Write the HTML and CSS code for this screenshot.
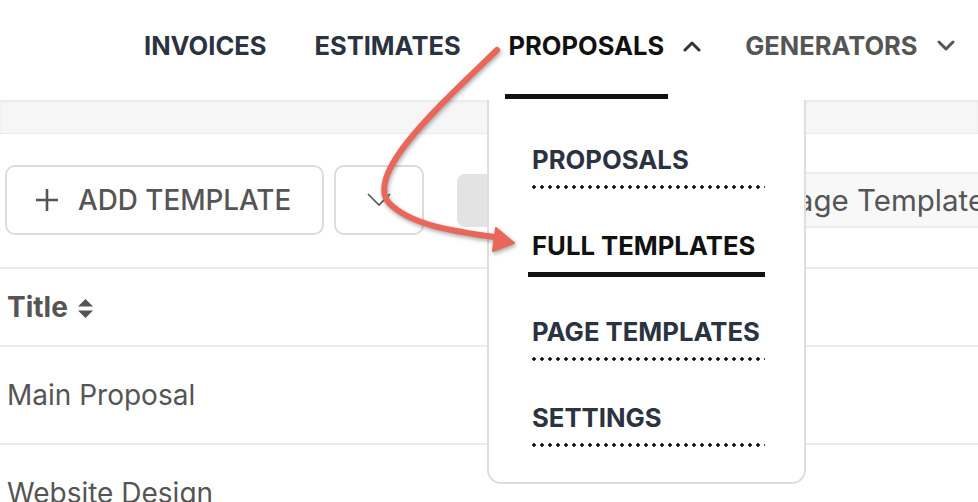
FILE: index.html
```html
<!DOCTYPE html>
<html>
<head>
    <title>Proposals - Full Templates</title>
    <link rel="stylesheet" href="styles.css">
</head>
<body>
    <header class="topbar">
        <nav class="nav">
            <a class="nav-item"><span class="nav-label">INVOICES</span></a>
            <a class="nav-item"><span class="nav-label">ESTIMATES</span></a>
            <a class="nav-item active">
                <span class="nav-label">PROPOSALS</span>
                <svg class="chevron" width="18" height="12" viewBox="0 0 18 12"><path d="M2 10 L9 3 L16 10" fill="none" stroke="#333" stroke-width="3" stroke-linecap="round" stroke-linejoin="round"/></svg>
            </a>
            <a class="nav-item muted">
                <span class="nav-label">GENERATORS</span>
                <svg class="chevron" width="18" height="12" viewBox="0 0 18 12"><path d="M2 2 L9 9 L16 2" fill="none" stroke="#555" stroke-width="3" stroke-linecap="round" stroke-linejoin="round"/></svg>
            </a>
        </nav>
    </header>
    <div class="subbar"></div>

    <main class="content">
        <div class="toolbar">
            <button class="btn btn-add">
                <svg width="24" height="24" viewBox="0 0 24 24"><path d="M12 1 V23 M1 12 H23" stroke="#555" stroke-width="2.6" fill="none"/></svg>
                ADD TEMPLATE
            </button>
            <button class="btn btn-caret">
                <svg width="24" height="14" viewBox="0 0 24 14"><path d="M1 1 L12 12 L23 1" fill="none" stroke="#555" stroke-width="1.6"/></svg>
            </button>
            <button class="btn-grey">
                <span class="grip">&#8942;</span>
            </button>
            <div class="filter">Page Templates</div>
        </div>

        <table class="list">
            <thead>
                <tr>
                    <th>Title
                        <svg class="sort" width="17" height="21" viewBox="0 0 17 21"><path d="M8.5 1 L16 8.5 H1 Z M1 12.5 H16 L8.5 20 Z" fill="#555"/></svg>
                    </th>
                </tr>
            </thead>
            <tbody>
                <tr><td>Main Proposal</td></tr>
                <tr><td>Website Design</td></tr>
            </tbody>
        </table>
    </main>

    <div class="dropdown">
        <ul>
            <li><a class="drop-item">PROPOSALS</a></li>
            <li><a class="drop-item current">FULL TEMPLATES</a></li>
            <li><a class="drop-item">PAGE TEMPLATES</a></li>
            <li><a class="drop-item">SETTINGS</a></li>
        </ul>
    </div>

    <!-- annotation arrow drawn over the screenshot -->
    <svg class="annotation" width="978" height="502" viewBox="0 0 978 502">
        <path d="M497 50 C 440 105, 364 174, 389 203 C 412 227, 462 232, 500 238" fill="none" stroke="#e8675a" stroke-width="6" stroke-linecap="round"/>
        <path d="M496 228 L514 243 L493 251 Z" fill="#e8675a" stroke="#e8675a" stroke-width="2" stroke-linejoin="round"/>
    </svg>
</body>
</html>
```

FILE: styles.css
```css
body {
    margin: 0;
    font-family: Inter, "Noto Sans", Arial, sans-serif;
    background: #fff;
    color: #555;
    width: 978px;
    height: 502px;
    overflow: hidden;
    position: relative;
}
.topbar {
    height: 100px;
    background: #fff;
}
.nav {
    display: flex;
    height: 100px;
    padding-left: 140px;
    gap: 40px;
}
.nav-item {
    display: flex;
    align-items: stretch;
    gap: 15px;
    color: #2b3240;
    font-size: 25.5px;
    font-weight: 700;
    text-decoration: none;
    white-space: nowrap;
}
.nav-label {
    display: flex;
    align-items: center;
    padding: 0 4px 3px;
    border-bottom: 5px solid transparent;
    margin-bottom: 1px;
}
.nav-item.active {
    color: #111;
}
.nav-item.active .nav-label {
    border-bottom-color: #111;
}
.nav-item.muted {
    color: #555;
}
.chevron {
    align-self: center;
    margin-bottom: 9px;
}
.subbar {
    height: 33px;
    background: #f6f6f6;
    border-bottom: 1px solid #ececec;
    box-shadow: inset 0 2px 3px rgba(0, 0, 0, 0.05);
}
.content {
    padding: 31px 0 0 5px;
}
.toolbar {
    display: flex;
    align-items: center;
    gap: 10px;
    height: 70px;
}
.btn {
    height: 70px;
    background: #fff;
    border: 2px solid #dcdcdc;
    border-radius: 10px;
    color: #555;
    font-family: inherit;
    display: flex;
    align-items: center;
    justify-content: center;
}
.btn-add {
    width: 319px;
    gap: 19px;
    font-size: 27.8px;
    font-weight: 500;
    padding: 0 0 0 28px;
    justify-content: flex-start;
}
.btn-caret {
    width: 90px;
}
.btn-grey {
    margin-left: 23px;
    width: 70px;
    height: 53px;
    border: none;
    border-radius: 8px;
    background: #e3e3e3;
    color: #888;
    font-size: 18px;
    text-align: right;
    padding-right: 12px;
}
.filter {
    margin-left: auto;
    width: 200px;
    height: 52px;
    padding-left: 36px;
    display: flex;
    align-items: center;
    background: #f8f8f8;
    border-top: 2px solid #ececec;
    border-bottom: 2px solid #ececec;
    font-size: 29.5px;
    color: #555;
    white-space: nowrap;
    overflow: hidden;
}
.list {
    margin: 32px 0 0 -5px;
    width: 978px;
    border-collapse: collapse;
}
.list th,
.list td {
    text-align: left;
    padding: 0 7px;
    border-top: 2px solid #ececec;
    color: #555;
}
.list th {
    height: 76px;
    font-size: 28px;
    font-weight: 700;
}
.list td {
    height: 96px;
    font-size: 28px;
    font-weight: 400;
}
.sort {
    vertical-align: -2px;
    margin-left: 2px;
}
.dropdown {
    position: absolute;
    left: 487px;
    top: 100px;
    width: 315px;
    height: 382px;
    background: #fff;
    border: 2px solid #dedede;
    border-top: none;
    border-radius: 0 0 14px 14px;
}
.dropdown ul {
    list-style: none;
    margin: 0;
    padding: 45px 0 0 39px;
}
.dropdown li {
    height: 86px;
}
.drop-item {
    display: block;
    width: 229px;
    padding: 0 4px 14px;
    line-height: 30px;
    font-size: 25.7px;
    font-weight: 700;
    color: #2b3240;
    white-space: nowrap;
    background-image: radial-gradient(circle, #111 1.5px, transparent 1.9px);
    background-size: 8px 4px;
    background-repeat: repeat-x;
    background-position: 2px 100%;
}
.drop-item.current {
    color: #111;
    background: none;
    padding-bottom: 11px;
    border-bottom: 5px solid #111;
}
.annotation {
    position: absolute;
    left: 0;
    top: 0;
    pointer-events: none;
    filter: drop-shadow(1px 2px 2px rgba(0, 0, 0, 0.35));
}
```
